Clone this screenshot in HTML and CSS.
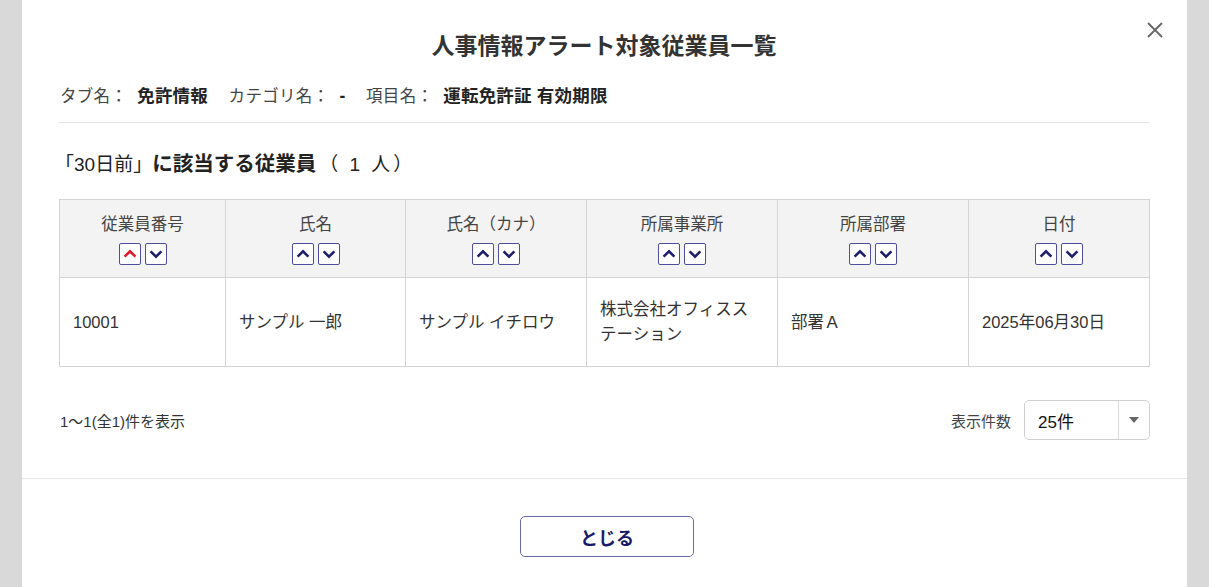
FILE: index.html
```html
<!DOCTYPE html>
<html lang="ja">
<head>
<meta charset="utf-8">
<link rel="stylesheet" href="styles.css">
</head>
<body>
<div class="backdrop">
  <div class="modal">
    <button class="close" aria-label="閉じる">
      <svg width="18" height="18" viewBox="0 0 18 18"><path d="M2 2 L16 16 M16 2 L2 16" stroke="#666" stroke-width="1.8" fill="none"/></svg>
    </button>
    <div class="content">
      <h1 class="title">人事情報アラート対象従業員一覧</h1>
      <div class="info">
        <span class="lbl">タブ名：</span><b>免許情報</b>
        <span class="lbl">カテゴリ名：</span><b>-</b>
        <span class="lbl">項目名：</span><b>運転免許証 有効期限</b>
      </div>
      <h2 class="heading"><span class="q">「30日前」</span>に該当する従業員<span class="count">（ 1 人）</span></h2>
      <table class="grid">
        <colgroup>
          <col style="width:166px"><col style="width:180px"><col style="width:181px"><col style="width:191px"><col style="width:191px"><col style="width:181px">
        </colgroup>
        <thead>
          <tr>
            <th><div>従業員番号</div><div class="sort"><span class="sb active"><svg viewBox="0 0 20 20"><path d="M4 13 L10 7 L16 13" /></svg></span><span class="sb"><svg viewBox="0 0 20 20"><path d="M4 7 L10 13 L16 7" /></svg></span></div></th>
            <th><div>氏名</div><div class="sort"><span class="sb"><svg viewBox="0 0 20 20"><path d="M4 13 L10 7 L16 13" /></svg></span><span class="sb"><svg viewBox="0 0 20 20"><path d="M4 7 L10 13 L16 7" /></svg></span></div></th>
            <th><div>氏名（カナ）</div><div class="sort"><span class="sb"><svg viewBox="0 0 20 20"><path d="M4 13 L10 7 L16 13" /></svg></span><span class="sb"><svg viewBox="0 0 20 20"><path d="M4 7 L10 13 L16 7" /></svg></span></div></th>
            <th><div>所属事業所</div><div class="sort"><span class="sb"><svg viewBox="0 0 20 20"><path d="M4 13 L10 7 L16 13" /></svg></span><span class="sb"><svg viewBox="0 0 20 20"><path d="M4 7 L10 13 L16 7" /></svg></span></div></th>
            <th><div>所属部署</div><div class="sort"><span class="sb"><svg viewBox="0 0 20 20"><path d="M4 13 L10 7 L16 13" /></svg></span><span class="sb"><svg viewBox="0 0 20 20"><path d="M4 7 L10 13 L16 7" /></svg></span></div></th>
            <th><div>日付</div><div class="sort"><span class="sb"><svg viewBox="0 0 20 20"><path d="M4 13 L10 7 L16 13" /></svg></span><span class="sb"><svg viewBox="0 0 20 20"><path d="M4 7 L10 13 L16 7" /></svg></span></div></th>
          </tr>
        </thead>
        <tbody>
          <tr>
            <td>10001</td>
            <td>サンプル 一郎</td>
            <td>サンプル イチロウ</td>
            <td>株式会社オフィスス<br>テーション</td>
            <td>部署Ａ</td>
            <td>2025年06月30日</td>
          </tr>
        </tbody>
      </table>
      <div class="pager">
        <span class="range">1〜1(全1)件を表示</span>
        <div class="per">
          <span class="per-lbl">表示件数</span>
          <div class="select"><span class="val">25件</span><span class="arrow"><svg width="12" height="8" viewBox="0 0 12 8"><path d="M1 1 L11 1 L6 7 Z" fill="#666"/></svg></span></div>
        </div>
      </div>
    </div>
    <div class="footer">
      <button class="btn-close">とじる</button>
    </div>
  </div>
</div>
</body>
</html>
```
FILE: styles.css
```css
* { box-sizing: border-box; }
html, body { margin: 0; padding: 0; }
body {
  background: #d9d9d9;
  font-family: "Liberation Sans", "Noto Sans CJK JP", sans-serif;
  color: #333;
  width: 1209px;
  height: 587px;
  overflow: hidden;
}
.backdrop {
  display: flex;
  justify-content: center;
  padding-left: 1px;
}
.modal {
  position: relative;
  width: 1165px;
  height: 587px;
  background: #fff;
  margin-left: -1px;
}
.close {
  position: absolute;
  top: 21px;
  right: 23px;
  width: 18px;
  height: 18px;
  padding: 0;
  border: 0;
  background: none;
  display: flex;
}
.content {
  padding: 30px 38px 0 37px;
}
.title {
  margin: 0;
  text-align: center;
  font-size: 23px;
  line-height: 32px;
  font-weight: bold;
  color: #333;
}
.info {
  margin-top: 22px;
  height: 39px;
  line-height: 24px;
  font-size: 16.5px;
  border-bottom: 1px solid #e3e3e3;
  padding-left: 1px;
}
.info .lbl { color: #444; margin-left: 16px; margin-right: 10px; letter-spacing: 0.3px; }
.info .lbl:first-child { margin-left: 0; }
.info b { color: #222; font-weight: bold; font-size: 17.5px; letter-spacing: 0.2px; }
.heading {
  margin: 27px 0 0;
  font-size: 20.5px;
  line-height: 28px;
  font-weight: bold;
  color: #222;
  padding-left: 1px;
}
.heading .q { font-weight: normal; margin-left: -5px; font-size: 19px; }
.heading .count { font-weight: normal; margin-left: 3px; letter-spacing: 3px; font-size: 19px; }
.grid {
  margin-top: 20px;
  border-collapse: collapse;
  table-layout: fixed;
  width: 1090px;
  font-size: 16.5px;
}
.grid th, .grid td {
  border: 1px solid #d4d4d4;
}
.grid th {
  background: #f3f3f3;
  font-weight: normal;
  color: #444;
  height: 78px;
  padding: 13px 0 11px;
  vertical-align: top;
  line-height: 22px;
}
.sort {
  display: flex;
  justify-content: center;
  gap: 4px;
  margin-top: 8px;
}
.sb {
  width: 22px;
  height: 22px;
  border: 1.5px solid #4e4e9a;
  border-radius: 2px;
  background: #fff;
  display: flex;
  align-items: center;
  justify-content: center;
}
.sb svg { width: 18px; height: 18px; }
.sb path { stroke: #1d1d6b; stroke-width: 2.8; fill: none; }
.sb.active path { stroke: #e0182a; }
.grid td {
  height: 89px;
  padding: 0 12px 0 13px;
  line-height: 25px;
  color: #333;
  vertical-align: middle;
}
.pager {
  margin-top: 33px;
  display: flex;
  justify-content: space-between;
  align-items: center;
  padding-left: 1px;
}
.range { font-size: 15px; color: #333; }
.per { display: flex; align-items: center; gap: 13px; }
.per-lbl { font-size: 15px; color: #444; }
.select {
  width: 126px;
  height: 40px;
  border: 1px solid #cfcfcf;
  border-radius: 5px;
  display: flex;
  align-items: stretch;
  margin-right: -1px;
}
.select .val {
  flex: 1;
  display: flex;
  align-items: center;
  padding-left: 13px;
  font-size: 17px;
  color: #111;
}
.select .arrow {
  width: 31px;
  border-left: 1px solid #d8d8d8;
  display: flex;
  align-items: center;
  justify-content: center;
}
.footer {
  margin-top: 38px;
  border-top: 1px solid #e6e6e6;
  display: flex;
  justify-content: center;
  padding-top: 37px;
}
.btn-close {
  width: 174px;
  height: 41px;
  border: 1.5px solid #6a6aaa;
  border-radius: 5px;
  background: #fff;
  color: #1a1a6a;
  font-family: "Noto Sans CJK JP", sans-serif;
  font-weight: bold;
  font-size: 18px;
  margin-left: 5px;
}
```
